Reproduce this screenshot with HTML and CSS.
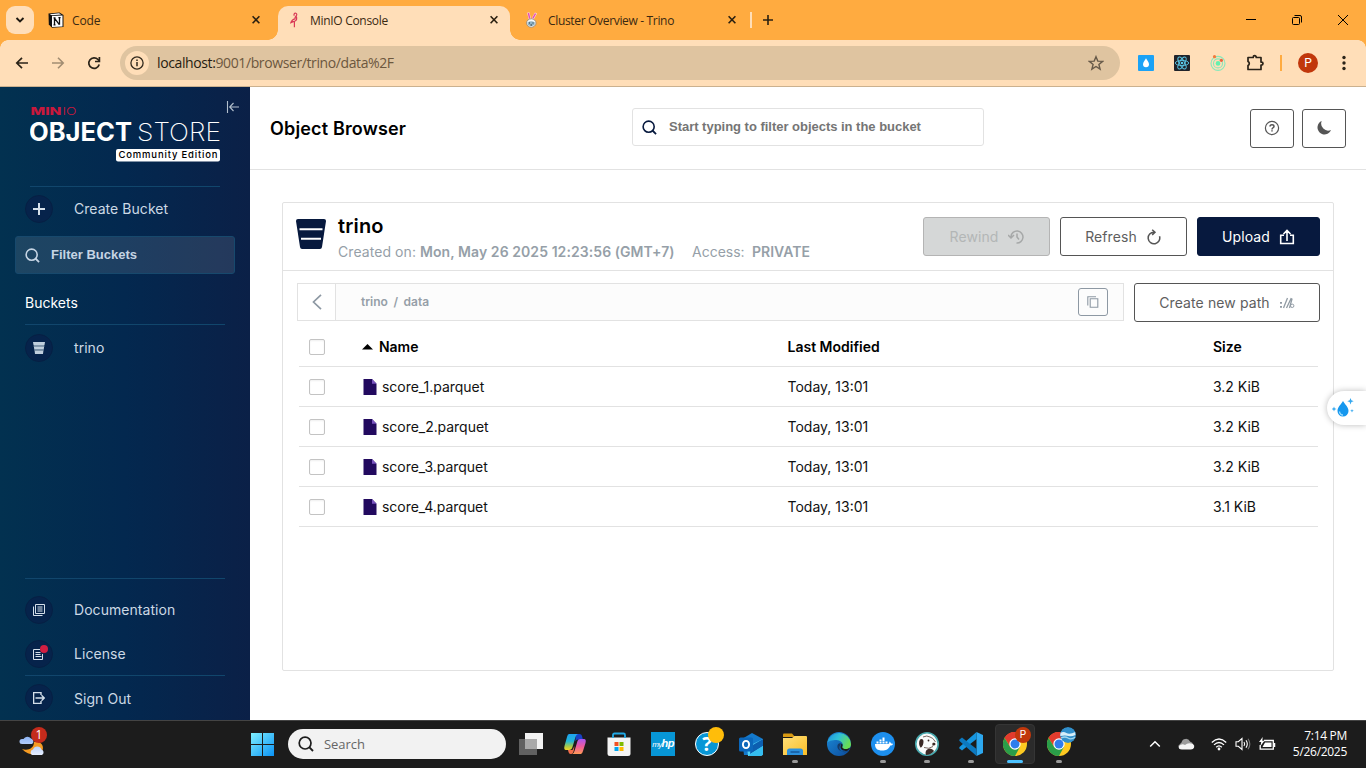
FILE: index.html
```html
<!DOCTYPE html>
<html lang="en">
<head>
<meta charset="utf-8">
<title>MinIO Console</title>
<link rel="stylesheet" href="styles.css">
</head>
<body>
<svg class="defs" width="0" height="0" aria-hidden="true">
  <defs>
    <linearGradient id="win" x1="0" y1="0" x2="1" y2="1"><stop offset="0" stop-color="#7ff0ff"/><stop offset="1" stop-color="#0a92f5"/></linearGradient>
    <linearGradient id="cpA" x1="0" y1="0" x2="0" y2="1"><stop offset="0" stop-color="#1ea2f0"/><stop offset=".45" stop-color="#21b6d8"/><stop offset=".75" stop-color="#9fc850"/><stop offset="1" stop-color="#f6d323"/></linearGradient>
    <linearGradient id="cpB" x1="0" y1="0" x2="0" y2="1"><stop offset="0" stop-color="#a855f0"/><stop offset=".5" stop-color="#ee5a9c"/><stop offset="1" stop-color="#ff9a55"/></linearGradient>
    <linearGradient id="fold" x1="0" y1="0" x2="1" y2="1"><stop offset="0" stop-color="#ffe07a"/><stop offset="1" stop-color="#f9bd27"/></linearGradient>
    <linearGradient id="edgeTop" x1="0" y1="0" x2="1" y2=".4"><stop offset="0" stop-color="#1e90dc"/><stop offset=".5" stop-color="#2fc0d8"/><stop offset="1" stop-color="#67dc55"/></linearGradient>
    <linearGradient id="edgeLow" x1="0" y1="0" x2="1" y2="1"><stop offset="0" stop-color="#1b8bd8"/><stop offset="1" stop-color="#0c4a9a"/></linearGradient>
    <linearGradient id="cloud" x1="0" y1="0" x2="0" y2="1"><stop offset="0" stop-color="#8eb4f4"/><stop offset="1" stop-color="#e6eeff"/></linearGradient>
    <symbol id="x" viewBox="0 0 16 16"><path d="M4.600 4.300l6.800 7M11.400 4.300l-6.800 7" stroke="#2b2010" stroke-width="1.600" fill="none"/></symbol>
    <symbol id="glass" viewBox="0 0 16 16"><circle cx="7.100" cy="7.100" r="5.900" fill="none" stroke="currentColor" stroke-width="1.700"/><path d="M11.200 11.200l3.800 3.800" stroke="currentColor" stroke-width="1.900"/></symbol>
    <symbol id="chrome" viewBox="0 0 24 24">
      <circle cx="12" cy="12" r="12" fill="#fdc921"/>
      <path d="M12 12L1.600 6A12 12 0 0 1 22.400 6z" fill="#e33b2e"/>
      <path d="M12 6.500h10.700A12 12 0 0 0 1.600 6l5.600 9z" fill="#e33b2e"/>
      <path d="M1.600 6A12 12 0 0 0 12 24l5-9.200-9.800.2z" fill="#2a9e49"/>
      <circle cx="12" cy="12" r="5.700" fill="#fff"/><circle cx="12" cy="12" r="4.500" fill="#2f7ded"/>
    </symbol>
    <symbol id="file" viewBox="0 0 14 16"><path d="M.5 0H9l4.500 4.800V16H.5z" fill="#220a5f"/><path d="M9 0l4.500 4.800H9z" fill="#7a55c0"/></symbol>
  </defs>
</svg>

<header class="tabstrip">
  <button class="tab-search"><svg width="10" height="8" viewBox="0 0 10 8"><path d="M1.500 2L5 5.500 8.500 2" fill="none" stroke="#1f1a12" stroke-width="1.900"/></svg></button>
  <div class="tab">
    <svg width="16" height="16" viewBox="0 0 16 16"><path d="M.5 1.500L11.500.4 15.500 3v12L4 15.800.8 12.500z" fill="#111"/><path d="M4 4l10.500-.6v11L4 15z" fill="#fff"/><path d="M1.600 2.200L11 1.300l2.200 1.300L4 3.200z" fill="#fff"/><path d="M6.500 12.800V6M6.300 5.900l5 6.700M11.500 12.800V5.500M5.500 5.800h2M10.400 5.600h2.200M5.500 12.800h2" stroke="#111" stroke-width="1.300" fill="none"/></svg>
    <span class="tab-title t-code">Code</span><svg class="close" width="16" height="16"><use href="#x"/></svg>
  </div>
  <div class="tab active">
    <svg width="16" height="16" viewBox="0 0 16 16"><path d="M8.300 3.700c-.9-1.400.2-2.900 1.600-2.400 1.300.5 1 1.900.1 2.900-1 1.200-1.500 2-.6 2.800M9.500 6.900C7.600 6.800 5.300 8.600 4.800 10.800L9 9c1.600-.8 2.200-2.200 1.200-4.800M8.400 9v6.300M8.600 9.500H5" stroke="#d93a56" stroke-width="1.200" fill="none"/></svg>
    <span class="tab-title t-minio">MinIO Console</span><svg class="close" width="16" height="16"><use href="#x"/></svg>
  </div>
  <div class="tab">
    <svg width="16" height="16" viewBox="0 0 16 16"><path d="M4.300.5l1.600 6.700M12 1L8.600 7" stroke="#f8dfe9" stroke-width="2.400"/><path d="M4.400 1l1.300 5.600M11.600 1.500L8.800 6.400" stroke="#e64fb4" stroke-width="1.500"/><ellipse cx="7.300" cy="11" rx="4.700" ry="4.200" fill="#f7fafb" stroke="#8e8275" stroke-width=".8"/><path d="M3.700 10.200q3.500-1.700 7 0v2.500q-3.500 2.800-7 0z" fill="#8fb3c4"/><path d="M5 11h1M8.500 11h1M6.500 13h1.500" stroke="#263849"/></svg>
    <span class="tab-title t-trino">Cluster Overview - Trino</span><svg class="close" width="16" height="16"><use href="#x"/></svg>
  </div>
  <span class="tab-sep"></span>
  <svg class="newtab" width="12" height="12" viewBox="0 0 12 12"><path d="M6 1v10M1 6h10" stroke="#2b2010" stroke-width="1.600"/></svg>
  <div class="window-controls">
    <svg width="12" height="12" viewBox="0 0 12 12"><path d="M1 5.500h10" stroke="#000"/></svg>
    <svg width="12" height="12" viewBox="0 0 12 12"><rect x="1.500" y="3.500" width="7" height="7" rx="1" fill="none" stroke="#000"/><path d="M3.500 1.500H9q1.500 0 1.500 1.500v5.500" fill="none" stroke="#000"/></svg>
    <svg width="12" height="12" viewBox="0 0 12 12"><path d="M1 1l10 10M11 1L1 11" stroke="#000"/></svg>
  </div>
</header>

<nav class="toolbar">
  <div class="nav-buttons">
    <svg width="16" height="16" viewBox="0 0 16 16"><path d="M14 8H3M8 2.800L2.800 8 8 13.200" fill="none" stroke="#2b2318" stroke-width="1.700"/></svg>
    <svg width="16" height="16" viewBox="0 0 16 16"><path d="M2 8h11M8 2.800L13.200 8 8 13.200" fill="none" stroke="#a28d72" stroke-width="1.600"/></svg>
    <svg width="16" height="16" viewBox="0 0 16 16"><path d="M13.200 9.500A5.300 5.300 0 1 1 12 4.500l1 1.100" fill="none" stroke="#2b2318" stroke-width="1.700"/><path d="M13.400 2v4.500H9" fill="none" stroke="#2b2318" stroke-width="1.700"/></svg>
  </div>
  <div class="address">
    <span class="site-info"><svg width="14" height="14" viewBox="0 0 14 14"><circle cx="7" cy="7" r="6.100" fill="none" stroke="#332a1e" stroke-width="1.300"/><path d="M7 6v4.300M7 3.600v1.500" stroke="#332a1e" stroke-width="1.500"/></svg></span>
    <span class="url"><b>localhost:</b>9001/browser/trino/data%2F</span>
    <svg class="star" width="16" height="16" viewBox="0 0 16 16"><path d="M8 1.700l1.800 4.400 4.800.3-3.700 3 1.200 4.700L8 11.500l-4.100 2.600 1.200-4.700-3.700-3 4.800-.3z" fill="none" stroke="#675a49" stroke-width="1.400"/></svg>
  </div>
  <div class="extensions">
    <svg width="16" height="16" viewBox="0 0 16 16"><rect width="16" height="16" rx="1" fill="#1ba2f6"/><path d="M8 3.300c1 1.800 3 4 3 6a3 3 0 0 1-6 0c0-2 2-4.200 3-6z" fill="#fff"/></svg>
    <svg width="16" height="16" viewBox="0 0 16 16"><rect width="16" height="16" rx="1" fill="#20232a"/><g fill="none" stroke="#5bc8e8" stroke-width=".9"><ellipse cx="8" cy="8" rx="6.700" ry="2.600"/><ellipse cx="8" cy="8" rx="6.700" ry="2.600" transform="rotate(60 8 8)"/><ellipse cx="8" cy="8" rx="6.700" ry="2.600" transform="rotate(120 8 8)"/></g><circle cx="8" cy="8" r="1.300" fill="#5bc8e8"/></svg>
    <svg width="16" height="16" viewBox="0 0 16 16"><g fill="none" stroke="#86e9bb" stroke-width="1.100"><circle cx="8" cy="8.400" r="7"/><circle cx="8" cy="8.400" r="4.500"/></g><circle cx="8" cy="8.400" r="2.300" fill="#65f0ae"/><circle cx="4.500" cy="1.700" r="1.600" fill="#f27a3c"/><circle cx="11.400" cy="5.300" r="1.600" fill="#f0633c"/></svg>
    <svg width="18" height="18" viewBox="0 0 18 18"><path d="M2 3.500h5.200v-.3a1.500 1.500 0 0 1 3 0v.3H15v4.600h.5a1.500 1.500 0 0 1 0 3H15v4.400H2v-4a2.200 2.200 0 0 0 0-4z" fill="none" stroke="#2b2318" stroke-width="1.700" stroke-linejoin="round"/></svg>
  </div>
  <span class="tool-sep"></span>
  <span class="avatar">P</span>
  <svg class="kebab" width="4" height="16" viewBox="0 0 4 16"><g fill="#2b2318"><circle cx="2" cy="2.500" r="1.700"/><circle cx="2" cy="8" r="1.700"/><circle cx="2" cy="13.500" r="1.700"/></g></svg>
</nav>

<div class="app">
  <aside class="sidebar">
    <div class="brand">
      <svg width="190" height="60" viewBox="0 0 190 60">
        <text class="lg-min" x="0.500" y="10" textLength="31" lengthAdjust="spacingAndGlyphs">MIN</text>
        <text class="lg-io" x="32.500" y="10" textLength="14" lengthAdjust="spacingAndGlyphs">IO</text>
        <text class="lg-obj" x="-1" y="36" textLength="103" lengthAdjust="spacingAndGlyphs">OBJECT</text>
        <text class="lg-store" x="107" y="36" textLength="84" lengthAdjust="spacingAndGlyphs">STORE</text>
        <rect x="86" y="44" width="104" height="12.500" rx="2" fill="#fff"/>
        <text class="lg-ce" x="88.500" y="53" textLength="99" lengthAdjust="spacing">Community Edition</text>
      </svg>
      <svg class="collapse" width="14" height="14" viewBox="0 0 14 14"><path d="M1.500 1v12M4 7h9M7.500 3L3.700 7l3.800 4" fill="none" stroke="#b3c0cd" stroke-width="1.100"/></svg>
    </div>
    <a class="item create"><span class="dot"><svg width="12" height="12" viewBox="0 0 12 12"><path d="M6 0v12M0 6h12" stroke="#d5dfea" stroke-width="2"/></svg></span><span>Create Bucket</span></a>
    <div class="filter"><svg width="15" height="15"><use href="#glass"/></svg><span>Filter Buckets</span></div>
    <div class="section">Buckets</div>
    <a class="item bucket"><span class="dot"><svg width="12" height="12" viewBox="0 0 12 12"><path d="M0 0h12l-.5 3H.5zM.8 4.300h10.400l-.5 3.200H1.300zM1.600 8.800h8.800L10 12H2z" fill="#c0cfdd"/><path d="M.6 3h10.800l-.2 1.800H.8zM1.200 7.300h9.600l-.3 1.700h-9z" fill="#7f95aa"/></svg></span><span>trino</span></a>
    <div class="bottom">
      <a class="item doc"><span class="dot"><svg width="12" height="12" viewBox="0 0 12 12"><path d="M2.500.5h9v9h-9zM.5 2.500v9h9M4.500 3h5M4.500 5h5M4.500 7h5" fill="none" stroke="#d5dfea"/></svg></span><span>Documentation</span></a>
      <a class="item license"><span class="dot"><svg width="12" height="12" viewBox="0 0 12 12"><path d="M7 1.500H.5v10h9V6M2.500 4.500h5M2.500 6.500h5M2.500 8.500h6" fill="none" stroke="#d5dfea"/></svg><i class="badge"></i></span><span>License</span></a>
      <a class="item"><span class="dot"><svg width="12" height="12" viewBox="0 0 12 12"><path d="M8 3V.6H.6v10.800H8V9M2.500 6H11M8.500 3.300L11.300 6 8.500 8.700" fill="none" stroke="#d5dfea" stroke-width="1.400"/></svg></span><span>Sign Out</span></a>
    </div>
  </aside>

  <main class="main">
    <div class="page-head">
      <h1>Object Browser</h1>
      <div class="search"><svg width="15" height="15"><use href="#glass"/></svg><span>Start typing to filter objects in the bucket</span></div>
      <div class="head-actions">
        <button class="btn square"><svg width="16" height="16" viewBox="0 0 16 16"><circle cx="8" cy="8" r="6.600" fill="none" stroke="#555" stroke-width="1.200"/><path d="M6 6.500Q6 4.700 8 4.700t2 1.700C10 7.700 8 7.800 8 9.400M8 10.300v1.300" fill="none" stroke="#555" stroke-width="1.500"/></svg></button>
        <button class="btn square"><svg width="16" height="16" viewBox="0 0 16 16"><path d="M5.700 1A7 7 0 1 0 15 10 7 7 0 0 1 5.700 1z" fill="#555"/></svg></button>
      </div>
    </div>

    <section class="card">
      <div class="card-head">
        <svg width="30" height="30" viewBox="0 0 30 30"><path d="M0 2Q0 0 2 0h26q2 0 2 2l-4 26q-.4 2-2 2H6q-1.600 0-2-2z" fill="#07193e"/><path d="M3.500 10.200h23M5 19.800h20" stroke="#fff" stroke-width="2"/></svg>
        <div class="bucket-info">
          <h2>trino</h2>
          <p><span class="created">Created on: <b>Mon, May 26 2025 12:23:56 (GMT+7)</b></span><span class="access">Access:</span><b class="private">PRIVATE</b></p>
        </div>
        <div class="actions">
          <button class="btn disabled"><span>Rewind</span><svg width="16" height="16" viewBox="0 0 16 16"><path d="M3 8.500V7.500A6 6 0 1 1 8.500 14M0 6l3 3 3-3M9 4.500V8l2 2.500" fill="none" stroke="#a6a8a8" stroke-width="1.500"/></svg></button>
          <button class="btn"><span>Refresh</span><svg width="16" height="16" viewBox="0 0 16 16"><path d="M13.500 7.200A5.800 5.800 0 1 1 8 3.200M6.200.7L9 3.300 6.200 6" fill="none" stroke="#555" stroke-width="1.500"/></svg></button>
          <button class="btn primary"><span>Upload</span><svg width="16" height="16" viewBox="0 0 16 16"><path d="M5 6.200H1.700v8.300h12.600V6.200H11M8 12V2M4.500 5L8 1.500 11.500 5" fill="none" stroke="#fff" stroke-width="1.600"/></svg></button>
        </div>
      </div>

      <div class="path-row">
        <div class="path">
          <span class="back"><svg width="10" height="16" viewBox="0 0 10 16"><path d="M9 .8L1.500 8 9 15.200" fill="none" stroke="#8d98a3" stroke-width="1.700"/></svg></span>
          <span class="crumbs">trino&nbsp;/&nbsp;data</span>
          <button class="copy"><svg width="12" height="12" viewBox="0 0 12 12"><path d="M.8 9.500V.8H9M3.200 2.800h7.600v8.500H3.200z" fill="none" stroke="#8d98a3" stroke-width="1.100"/></svg></button>
        </div>
        <button class="btn newpath"><span>Create new path</span><svg width="16" height="12" viewBox="0 0 16 12"><path d="M1 5h2v1.800H1zM1 9h2v1.800H1z" fill="#929ca5"/><path d="M4.500 11L8.500 1M7.500 11L12.300 1M10.500 11l2.600-9.500" stroke="#929ca5" stroke-width="1.300"/><circle cx="13.200" cy="8.800" r="1.700" fill="none" stroke="#929ca5"/></svg></button>
      </div>

      <div class="table">
        <div class="row head"><i class="check"></i><span class="name"><svg width="11" height="6" viewBox="0 0 11 6"><path d="M0 5.500L5.500 0 11 5.500z"/></svg>Name</span><span class="modified">Last Modified</span><span class="size">Size</span></div>
        <div class="row"><i class="check"></i><span class="name"><svg width="14" height="16"><use href="#file"/></svg>score_1.parquet</span><span class="modified">Today, 13:01</span><span class="size">3.2 KiB</span></div>
        <div class="row"><i class="check"></i><span class="name"><svg width="14" height="16"><use href="#file"/></svg>score_2.parquet</span><span class="modified">Today, 13:01</span><span class="size">3.2 KiB</span></div>
        <div class="row"><i class="check"></i><span class="name"><svg width="14" height="16"><use href="#file"/></svg>score_3.parquet</span><span class="modified">Today, 13:01</span><span class="size">3.2 KiB</span></div>
        <div class="row"><i class="check"></i><span class="name"><svg width="14" height="16"><use href="#file"/></svg>score_4.parquet</span><span class="modified">Today, 13:01</span><span class="size">3.1 KiB</span></div>
      </div>
    </section>
    <div class="floater"><svg width="24" height="22" viewBox="0 0 24 22"><path d="M11 4c2 3.500 5.500 6 5.500 10a5.500 5.500 0 0 1-11 0c0-4 3.500-6.500 5.500-10z" fill="#1597ee"/><path d="M7.500 14.500A3.500 3.500 0 0 0 11 18" stroke="#9bdcff" fill="none" stroke-width="1.300"/><path d="M18.500 1l.9 2.300 2.300.9-2.300.9-.9 2.300-.9-2.300-2.300-.9 2.300-.9zM2 9.500l.7 1.800 1.800.7-1.800.7L2 14.500l-.7-1.800L-.5 12l1.800-.7zM20 12l.5 1.300 1.300.5-1.300.5-.5 1.300-.5-1.300-1.300-.5 1.300-.5z" fill="#35a8ef"/></svg></div>
  </main>
</div>

<footer class="taskbar">
  <div class="widget"><svg width="26" height="26" viewBox="0 0 26 26"><path d="M15 11c7-1 11 4 8 10-4 4-14 4-20-3 5 2 12 0 12-7z" fill="#f59b22"/><path d="M4 13a3 3 0 0 1 .5-5A4.500 4.500 0 0 1 12 7.500 3 3 0 0 1 13 13zM13 24a3 3 0 0 1 1-5.500 4.500 4.500 0 0 1 8.500 0A3 3 0 0 1 23 24zM4 13H3a2.500 2.500 0 0 1 0-5h2z" fill="url(#cloud)"/></svg><span class="count">1</span></div>
  <svg class="start" width="24" height="24" viewBox="0 0 24 24"><path d="M1 1h11v11H1zM13 1h11v11H13zM1 13h11v11H1zM13 13h11v11H13z" fill="url(#win)"/></svg>
  <div class="task-search"><svg width="16" height="16"><use href="#glass"/></svg><span>Search</span></div>
  <div class="apps">
    <span class="app-ic"><svg width="24" height="24" viewBox="0 0 24 24"><path d="M6 1h18v16H6z" fill="#f2f2f2"/><path d="M0 7h18v16H0z" fill="#666" opacity=".93"/><path d="M6 7h12v10H6z" fill="#a9a9a9"/></svg></span>
    <span class="app-ic"><svg width="24" height="24" viewBox="0 0 24 24"><path d="M13 2h3.500q2 0 2.500 2l.9 3.500H15q-2 0-2.700 2z" fill="#1741c8"/><path d="M6 2h9q-1.800.5-2.500 3l-3 10q-.7 3-3.500 3H3Q.5 18 1.500 14L4 5q.7-3 2-3z" fill="url(#cpA)"/><path d="M18 22H9q1.800-.5 2.500-3l3-10q.7-2 2.500-2h4q2.500 0 1.500 4L20 19q-.8 3-2 3z" fill="url(#cpB)"/><path d="M5 18h4.500l2-4-.8 5q-.7 2.500-2.200 3H7.500Q6 22 5.500 20z" fill="#f36d4b"/></svg></span>
    <span class="app-ic"><svg width="24" height="24" viewBox="0 0 24 24"><path d="M.5 5.500h23v16q0 2.500-2.500 2.500H3Q.5 24 .5 21.500z" fill="#f4f4f4"/><path d="M6 6V3q0-1.500 1.500-1.500h9Q18 1.500 18 3v3" fill="none" stroke="#22a9e5" stroke-width="1.800"/><path d="M7.500 10h4v4h-4z" fill="#f25022"/><path d="M12.500 10h4v4h-4z" fill="#7fba00"/><path d="M7.500 15h4v4h-4z" fill="#00a4ef"/><path d="M12.500 15h4v4h-4z" fill="#ffb900"/></svg></span>
    <span class="app-ic"><span class="myhp">my<b>hp</b></span></span>
    <span class="app-ic"><span class="help">?</span><i class="help-dot"></i></span>
    <span class="app-ic"><svg width="24" height="24" viewBox="0 0 24 24"><path d="M3 7l10-6 11 6v16H5z" fill="#1479cb"/><path d="M8 15l16-8v14q0 3-3 3H9z" fill="#4fd2f7"/><path d="M12 14l12-7v7L11 22z" fill="#0c5eb0"/><path d="M10 23l14-9v7q0 3-3 3H10z" fill="#35bdf0"/><rect y="5.500" width="14" height="14" rx="1.500" fill="#0b67bb"/><ellipse cx="7" cy="12.500" rx="3.100" ry="3.600" fill="none" stroke="#fff" stroke-width="1.900"/></svg></span>
    <span class="app-ic running"><svg width="24" height="24" viewBox="0 0 24 24"><path d="M0 2.500q0-1 1-1h8l3 3.500H0z" fill="#d99a12"/><path d="M0 6h9l2.500-2H23q1 0 1 1v18H0z" fill="url(#fold)"/><path d="M4 23v-4q0-2.500 2.500-2.500h11q2.500 0 2.500 2.500v4z" fill="#2c91dd"/><path d="M7.500 20h9" stroke="#14599b" stroke-width="1.500"/></svg></span>
    <span class="app-ic"><svg width="24" height="24" viewBox="0 0 24 24"><circle cx="12" cy="12" r="12" fill="url(#edgeLow)"/><path d="M.2 11A12 12 0 0 1 24 12c0 4-3 5.500-6 5.500s-3.500-1.500-2.500-3C17 12 14 8 9.500 8 5 8 1.200 9 .2 11z" fill="url(#edgeTop)"/><path d="M14 11.500c-2-.8-3.800.7-3.600 3.200.3 3.500 4.500 6.300 11.600 4.300-1.500 1-3.500 1.500-5.500 1-3-.9-4.500-2.500-4-5 .3-1.600 1.500-2.500 1.500-3.500z" fill="#163a66"/><path d="M14.500 11.500c2 1.500.5 2.700.8 3.800.5 1.800 4.200 2.600 7.700.5q-1.500 4-6 2.800c-3.200-.9-4.500-3-2.500-7.100z" fill="#1c1c1c"/></svg></span>
    <span class="app-ic running"><svg width="24" height="24" viewBox="0 0 24 24"><circle cx="12" cy="12" r="12" fill="#1d8fee"/><path d="M4 12h13c1 0 1.500-.7 1.300-2.500 1 .5 1.700 1.300 1.700 2 1 0 1.500 0 2 .5-.5 1.200-1.500 1.500-2.700 1.500-1.500 3.700-4.500 5-8 5-5 0-7.300-2-7.300-6.500z" fill="#fff"/><path d="M5.500 9.500h2v2h-2zM8.500 9.500h2v2h-2zM11.500 9.500h2v2h-2zM14.500 9.500h2v2h-2zM8.500 7.500h2v1.500h-2zM11.500 5.500h2V9h-2z" fill="#fff"/></svg></span>
    <span class="app-ic running"><svg width="24" height="24" viewBox="0 0 24 24"><circle cx="12" cy="12" r="11.200" fill="#fafcfb" stroke="#48a9ae" stroke-width="1.600"/><path d="M5 7.500c2-1.200 3.500-.3 3.500 2 0 2.500-.7 4.800-2.700 6.300-2-1.800-2.300-5.800-.8-8.300zM17.500 11c1.500-.8 3.200 0 3 1.200-.2 1-2 1.600-3.200 1.200zM11 23c-1.200-3.500.5-5.500 3-6.500 2.500.3 4 1 5 2.500-2 2.500-5 4-8 4z" fill="#3a2925"/><path d="M8 5q4-2 7 0 3 .5 5.500 5M9 15.500q5 2 9-1" fill="none" stroke="#786862" stroke-width="1"/><circle cx="13.500" cy="8.500" r=".9" fill="#3a2925"/></svg></span>
    <span class="app-ic running"><svg width="24" height="24" viewBox="0 0 24 24"><path d="M17.500 0L24 3v18l-6.500 3z" fill="#2da8ef"/><path d="M17.500 0v7L3 18.500l-2.500-2q-.5-1 0-1.500z" fill="#1595df"/><path d="M17.500 24v-7L3 5.500l-2.500 2q-.5 1 0 1.500z" fill="#0c79c0"/></svg></span>
    <span class="app-ic current"><svg width="24" height="24"><use href="#chrome"/></svg><span class="profile">P</span></span>
    <span class="app-ic running"><svg width="24" height="24"><use href="#chrome"/></svg><svg class="profile sea" width="16" height="16" viewBox="0 0 16 16"><circle cx="8" cy="8" r="8" fill="#318fcb"/><path d="M.4 6q3-2 6 0t9-1v3q-4 2-7 1T.2 9z" fill="#d8eff9"/><path d="M1 11q4-2 7 0t7.500-1" fill="none" stroke="#a1d7ed" stroke-width="1.300"/></svg></span>
  </div>
  <div class="tray">
    <svg class="chev" width="12" height="8" viewBox="0 0 12 8"><path d="M1.200 6.500L6 1.800l4.800 4.700" fill="none" stroke="#fff" stroke-width="1.500"/></svg>
    <svg class="onedrive" width="17" height="12" viewBox="0 0 17 12"><path d="M3.500 4.500A4.500 4.500 0 0 1 12 3.500 4 4 0 0 1 13 11H4Q0 11 .5 7.500z" fill="#9b9b9b"/><path d="M1 8q3-3 6-1 3-3 8-1 2 1.500 1 3.700-.7 1.800-3 1.800H4Q0 11.500 1 8z" fill="#f4f4f4"/></svg>
    <svg class="wifi" width="16" height="14" viewBox="0 0 16 14"><path d="M.8 5.500Q8-1.500 15.200 5.500M3 7.900Q8 3 13 7.900M5.200 10.200Q8 7.500 10.800 10.200" fill="none" stroke="#fff" stroke-width="1.300"/><circle cx="8" cy="12" r="1.400" fill="#fff"/></svg>
    <svg class="vol" width="16" height="14" viewBox="0 0 16 14"><path d="M1 4.700h2.300L7 1.500v11L3.300 9.300H1z" fill="none" stroke="#fff" stroke-width="1.100"/><path d="M9 5q1.300 2 0 4M11 3.300q2.600 3.700 0 7.400" fill="none" stroke="#fff" stroke-width="1.100"/><path d="M13 1.700q3.700 5.300 0 10.600" fill="none" stroke="#777" stroke-width="1.100"/></svg>
    <svg class="batt" width="17" height="14" viewBox="0 0 17 14"><path d="M5 3.500h9.300v8.700H1.200V8" fill="none" stroke="#fff" stroke-width="1.300"/><path d="M6 5.500h6.500V10H3.500z" fill="#fff"/><path d="M15.500 6v4" stroke="#fff" stroke-width="1.500"/><path d="M3.700 0L0 5h2.200L1.500 9 5.500 3.700H3.300z" fill="#fff"/></svg>
    <div class="clock"><div class="time">7:14 PM</div><div class="date">5/26/2025</div></div>
  </div>
</footer>
</body>
</html>
```
FILE: styles.css
```css
* { box-sizing: border-box; }
body { margin: 0; width: 1366px; height: 768px; overflow: hidden; display: flex; flex-direction: column; font-family: Inter, "Liberation Sans", sans-serif; background: #fff; }
svg { display: block; flex: none; }
button { font: inherit; padding: 0; border: 0; background: none; }
.defs { position: absolute; }

/* Browser chrome */
.tabstrip { height: 40px; flex: none; display: flex; align-items: center; background: #ffab40; padding-left: 6px; font-family: "Open Sans", sans-serif; }
.tab-search { width: 28px; height: 28px; border-radius: 9px; background: #ffdeb8; display: flex; align-items: center; justify-content: center; margin-right: 6px; }
.tab { width: 232px; height: 34px; margin-right: 6px; align-self: flex-end; display: flex; align-items: center; padding: 0 8px 6px; gap: 8px; color: #3a2912; font-size: 12px; position: relative; }
.tab-title { flex: 1; white-space: nowrap; line-height: 16px; padding-top: 2px; }
.t-code { letter-spacing: -.15px; }
.t-minio { letter-spacing: -.3px; }
.t-trino { letter-spacing: -.33px; }
.tab.active { background: #ffdeb8; border-radius: 10px 10px 0 0; }
.tab.active::before, .tab.active::after { content: ""; position: absolute; bottom: 0; width: 10px; height: 10px; }
.tab.active::before { left: -10px; background: radial-gradient(circle at 0 0, transparent 9.5px, #ffdeb8 10px); }
.tab.active::after { right: -10px; background: radial-gradient(circle at 100% 0, transparent 9.5px, #ffdeb8 10px); }
.tab-sep { width: 2px; height: 16px; background: #ffdeb8; margin-left: -4px; }
.newtab { margin-left: 10px; }
.window-controls { margin-left: auto; display: flex; gap: 34px; padding-right: 17px; }
.toolbar { height: 47px; flex: none; display: flex; align-items: center; background: #ffdeb8; border-bottom: 1px solid #cbb18f; padding-left: 14px; position: relative; }
.toolbar::before, .toolbar::after { content: ""; position: absolute; top: 0; width: 8px; height: 8px; }
.toolbar::before { left: 0; background: radial-gradient(circle at 100% 100%, transparent 7.5px, #ffab40 8px); }
.toolbar::after { right: 0; background: radial-gradient(circle at 0 100%, transparent 7.5px, #ffab40 8px); }
.nav-buttons { display: flex; gap: 20px; width: 106px; }
.address { width: 1000px; height: 34px; border-radius: 17px; background: #dfc4a0; display: flex; align-items: center; padding: 0 16px 0 5px; }
.site-info { width: 24px; height: 24px; border-radius: 50%; background: #ffdeb8; display: flex; align-items: center; justify-content: center; }
.url { margin-left: 8px; font: 14px/20px "Open Sans", sans-serif; letter-spacing: -.39px; color: #6c573e; }
.url b { font-weight: 400; color: #261c10; }
.star { margin-left: auto; }
.extensions { display: flex; gap: 20px; align-items: center; margin-left: 18px; }
.tool-sep { width: 2px; height: 16px; background: #ffab40; margin-left: 16px; }
.avatar { width: 20px; height: 20px; border-radius: 50%; background: #c1370b; color: #fff; font: 12px/20px Roboto, sans-serif; text-align: center; margin-left: 16px; }
.kebab { margin-left: 24px; }

/* Console shell */
.app { flex: 1; display: flex; min-height: 0; }
.sidebar { width: 250px; background: linear-gradient(90deg, #023150 0%, #03284f 50%, #0b2047 100%); display: flex; flex-direction: column; color: #ccd9e5; font-size: 14px; }
.brand { height: 100px; margin: 0 30px; padding-top: 18px; border-bottom: 1px solid #11466c; position: relative; }
.collapse { position: absolute; left: 196px; top: 13px; }
.lg-min { font: 800 10px Inter; fill: #c9183c; }
.lg-io { font: 300 10px Inter; fill: #c9183c; }
.lg-obj { font: 700 25px Inter; fill: #fff; }
.lg-store { font: 200 25px Inter; fill: #fff; }
.lg-ce { font: 500 9.500px Inter; fill: #000; }
.item { height: 44px; display: flex; align-items: center; padding-left: 25px; letter-spacing: .05px; }
.create, .doc { padding-bottom: 1px; }
.dot { width: 28px; height: 28px; border-radius: 50%; background: #06234b; border: 1px solid #062044; display: flex; align-items: center; justify-content: center; margin-right: 21px; position: relative; }
.filter { height: 38px; margin: 5px 15px 0; border: 1px solid #17496d; border-radius: 3px; background: #ffffff1c; display: flex; align-items: center; padding-left: 9px; gap: 11px; font: bold 13px "Liberation Sans", sans-serif; color: #c6d5e4; }
.filter span { padding-bottom: 2px; }
.section { height: 51px; margin: 0 25px; padding-top: 19px; line-height: 20px; border-bottom: 1px solid #11466c; color: #fff; font-size: 14px; }
.bucket { height: 45px; }
.bottom { margin-top: auto; height: 142px; border-top: 1px solid #11466c; margin-right: 25px; margin-left: 25px; padding-top: 9px; }
.bottom .item { padding-left: 0; }
.bottom .license { border-bottom: 1px solid #11466c; }
.badge { position: absolute; width: 8px; height: 8px; border-radius: 50%; background: #d11f42; right: 4px; top: 4px; }

.main { flex: 1; position: relative; padding-bottom: 49px; display: flex; flex-direction: column; }
.page-head { height: 83px; flex: none; border-bottom: 1px solid #e2e2e2; display: flex; align-items: center; padding: 0 20px; }
h1 { margin: 0; font-size: 18px; font-weight: 600; width: 362px; color: #000; letter-spacing: .16px; line-height: 24px; padding-top: 2px; }
.search { width: 352px; height: 38px; margin-bottom: 2px; border: 1px solid #e2e2e2; border-radius: 3px; display: flex; align-items: center; gap: 12px; padding-left: 9px; color: #07193e; }
.search span { font: bold 13px "Liberation Sans", sans-serif; color: #757575; padding-bottom: 2px; letter-spacing: -.02px; }
.head-actions { margin-left: auto; display: flex; gap: 8px; }
.btn { height: 39px; border: 1px solid #555; border-radius: 3px; display: flex; align-items: center; justify-content: center; gap: 9px; width: 127px; color: #5e5e5e; font-size: 14px; letter-spacing: .1px; white-space: nowrap; }
.btn.square { width: 44px; }
.btn.disabled { background: #d5d7d7; border-color: #b4b4b4; color: #b3b6b6; }
.btn.primary { background: #07193e; border-color: #07193e; color: #fff; width: 123px; }
.card { margin: 32px 32px 0; flex: 1; border: 1px solid #e2e2e2; border-radius: 2px; }
.card-head { height: 68px; border-bottom: 1px solid #e2e2e2; display: flex; align-items: center; padding: 0 13px 0 13px; }
.card-head > svg { margin-bottom: 6px; }
.bucket-info { margin-left: 12px; padding-top: 2px; }
h2 { margin: 0; font-size: 20px; line-height: 24px; font-weight: 600; color: #000; letter-spacing: .15px; }
.bucket-info p { margin: 4px 0 0; font-size: 14px; line-height: 20px; color: #969fa8; display: flex; white-space: nowrap; }
.bucket-info b { font-weight: 600; }
.created { width: 354px; letter-spacing: .07px; }
.access { width: 60px; }
.actions { display: flex; gap: 10px; margin-left: auto; }
.path-row { display: flex; gap: 10px; padding: 12px 13px 0 14px; }
.path { flex: 1; height: 38px; border: 1px solid #e2e2e2; background: #fcfcfc; display: flex; align-items: center; padding-right: 15px; }
.back { width: 38px; height: 36px; background: #fff; border-right: 1px solid #e2e2e2; display: flex; align-items: center; justify-content: center; }
.crumbs { margin-left: 25px; font-size: 12px; font-weight: 600; color: #969fa8; word-spacing: 2.5px; padding-bottom: 1px; }
.copy { width: 30px; height: 28px; margin-left: auto; border: 1px solid #8d98a3; border-radius: 3px; display: flex; align-items: center; justify-content: center; }
.newpath { width: 186px; }
.table { margin: 0 15px 0 16px; font-size: 14px; color: #111; }
.row { height: 40px; border-bottom: 1px solid #e2e2e2; display: flex; align-items: center; padding-left: 10px; }
.row.head { height: 45px; font-weight: 600; color: #000; padding-top: 5px; }
.check { width: 16px; height: 16px; border: 1px solid #c3c3c3; border-radius: 2px; box-shadow: inset 0 1px 2px #0001; margin-right: 38px; }
.name { width: 424.5px; display: flex; align-items: center; gap: 5px; letter-spacing: -.04px; }
.head .name { gap: 6px; margin-left: -1px; width: 425.5px; }
.modified { width: 425.5px; }
.floater { position: absolute; right: 0; top: 304px; width: 39px; height: 34px; border-radius: 17px 0 0 17px; background: #fff; box-shadow: 0 0 6px #0004; display: flex; align-items: center; padding-left: 5px; }

/* Windows taskbar */
.taskbar { height: 48px; flex: none; background: #1c1c1c; border-top: 1px solid #444; padding-bottom: 1px; display: flex; align-items: center; color: #fff; font-family: "Open Sans", sans-serif; }
.widget { width: 250px; padding-left: 19px; position: relative; }
.count { position: absolute; left: 31px; top: -4px; width: 16px; height: 16px; border-radius: 50%; background: #c42b1c; font-size: 12px; line-height: 16px; text-align: center; }
.task-search { width: 218px; height: 30px; margin-left: 14px; border-radius: 15px; background: #f2f2f2; color: #1c1c1c; display: flex; align-items: center; gap: 10px; padding-left: 10px; }
.task-search span { color: #666; font-size: 13px; letter-spacing: -.05px; }
.apps { display: flex; margin-left: 3px; }
.app-ic { width: 44px; height: 40px; display: flex; align-items: center; justify-content: center; position: relative; }
.running::after, .current::after { content: ""; position: absolute; bottom: 1px; left: 19px; width: 6px; height: 3px; border-radius: 2px; background: #9a9a9a; }
.current::before { content: ""; position: absolute; inset: 0 2px; border: 1px solid #353535; border-radius: 4px; background: #2b2b2b; z-index: -1; }
.current { z-index: 0; }
.current::after { width: 16px; left: 14px; background: #4cc2ff; }
.myhp { width: 24px; height: 24px; background: #0796d6; font: italic 8px/23px "Liberation Sans", sans-serif; text-align: center; letter-spacing: -.7px; }
.myhp b { font-size: 11px; }
.help { width: 24px; height: 24px; border: 1px solid #fff; border-radius: 50%; background: #0796d6; font: bold 20px/22px "Open Sans", sans-serif; text-align: center; }
.help-dot { position: absolute; left: 23px; top: 3px; width: 16px; height: 16px; border-radius: 50%; background: #ffbd0a; }
.profile { position: absolute; left: 22px; top: 3px; width: 16px; height: 16px; border-radius: 50%; background: #c1370b; font: 10px/16px Roboto, sans-serif; text-align: center; }
.sea { left: 23px; background: none; }
.tray { margin-left: auto; display: flex; align-items: center; padding-right: 19px; }
.onedrive { margin-left: 17px; }
.wifi { margin-left: 16px; }
.vol { margin-left: 8px; }
.batt { margin-left: 8px; }
.clock { width: 56px; margin-left: 15px; text-align: right; font-size: 12px; line-height: 16px; letter-spacing: -.3px; white-space: nowrap; }
```
